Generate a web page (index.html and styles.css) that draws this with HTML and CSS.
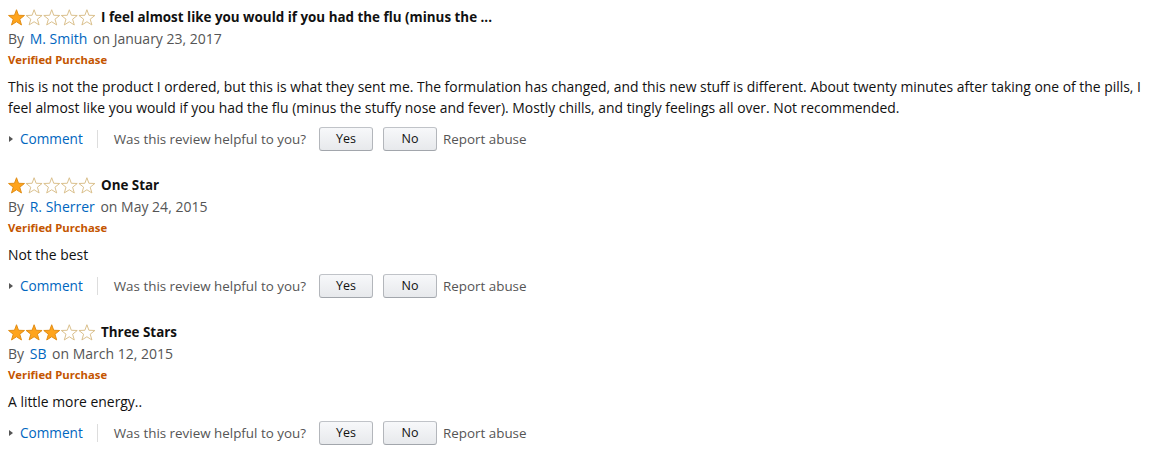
FILE: index.html
```html
<!DOCTYPE html>
<html>
<head>
<meta charset="utf-8">
<link rel="stylesheet" href="styles.css">
</head>
<body>
<svg width="0" height="0" class="defs">
  <defs>
    <symbol id="star" viewBox="0 0 16 16">
      <polygon points="8,0.7 9.9,5.9 15.5,6.1 11.1,9.6 12.7,15 8,12 3.3,15 4.9,9.6 0.5,6.1 6.1,5.9" stroke-linejoin="round"/>
    </symbol>
  </defs>
</svg>
<div class="reviews">
  <div class="review">
    <div class="title-row">
      <svg class="stars" width="88" height="17" viewBox="0 0 88 17">
        <use href="#star" x="0" y="0" width="17" height="17" class="full"/>
        <use href="#star" x="17.6" y="0" width="17" height="17" class="empty"/>
        <use href="#star" x="35.2" y="0" width="17" height="17" class="empty"/>
        <use href="#star" x="52.8" y="0" width="17" height="17" class="empty"/>
        <use href="#star" x="70.4" y="0" width="17" height="17" class="empty"/>
      </svg>
      <span class="title">I feel almost like you would if you had the flu (minus the ...</span>
    </div>
    <div class="byline">By <a class="link">M. Smith</a> on January 23, 2017</div>
    <div class="verified">Verified Purchase</div>
    <div class="body">This is not the product I ordered, but this is what they sent me. The formulation has changed, and this new stuff is different. About twenty minutes after taking one of the pills, I feel almost like you would if you had the flu (minus the stuffy nose and fever). Mostly chills, and tingly feelings all over. Not recommended.</div>
    <div class="actions">
      <span class="caret"></span><a class="link comment">Comment</a>
      <span class="sep"></span>
      <span class="helpful">Was this review helpful to you?</span>
      <button class="btn">Yes</button>
      <button class="btn">No</button>
      <span class="report">Report abuse</span>
    </div>
  </div>

  <div class="review">
    <div class="title-row">
      <svg class="stars" width="88" height="17" viewBox="0 0 88 17">
        <use href="#star" x="0" y="0" width="17" height="17" class="full"/>
        <use href="#star" x="17.6" y="0" width="17" height="17" class="empty"/>
        <use href="#star" x="35.2" y="0" width="17" height="17" class="empty"/>
        <use href="#star" x="52.8" y="0" width="17" height="17" class="empty"/>
        <use href="#star" x="70.4" y="0" width="17" height="17" class="empty"/>
      </svg>
      <span class="title">One Star</span>
    </div>
    <div class="byline">By <a class="link">R. Sherrer</a> on May 24, 2015</div>
    <div class="verified">Verified Purchase</div>
    <div class="body">Not the best</div>
    <div class="actions">
      <span class="caret"></span><a class="link comment">Comment</a>
      <span class="sep"></span>
      <span class="helpful">Was this review helpful to you?</span>
      <button class="btn">Yes</button>
      <button class="btn">No</button>
      <span class="report">Report abuse</span>
    </div>
  </div>

  <div class="review">
    <div class="title-row">
      <svg class="stars" width="88" height="17" viewBox="0 0 88 17">
        <use href="#star" x="0" y="0" width="17" height="17" class="full"/>
        <use href="#star" x="17.6" y="0" width="17" height="17" class="full"/>
        <use href="#star" x="35.2" y="0" width="17" height="17" class="full"/>
        <use href="#star" x="52.8" y="0" width="17" height="17" class="empty"/>
        <use href="#star" x="70.4" y="0" width="17" height="17" class="empty"/>
      </svg>
      <span class="title">Three Stars</span>
    </div>
    <div class="byline">By <a class="link">SB</a> on March 12, 2015</div>
    <div class="verified">Verified Purchase</div>
    <div class="body">A little more energy..</div>
    <div class="actions">
      <span class="caret"></span><a class="link comment">Comment</a>
      <span class="sep"></span>
      <span class="helpful">Was this review helpful to you?</span>
      <button class="btn">Yes</button>
      <button class="btn">No</button>
      <span class="report">Report abuse</span>
    </div>
  </div>
</div>
</body>
</html>
```

FILE: styles.css
```css
html, body {
  margin: 0;
  padding: 0;
  background: #fff;
}
body {
  font-family: "Open Sans", "Liberation Sans", Arial, sans-serif;
  font-size: 14px;
  color: #111;
}
.defs {
  position: absolute;
  width: 0;
  height: 0;
}
.reviews {
  padding: 7px 8px 0 8px;
  display: flex;
  flex-direction: column;
  gap: 23.5px;
}
.review {
  display: flex;
  flex-direction: column;
}
.title-row {
  display: flex;
  align-items: center;
  height: 20px;
}
.stars {
  display: block;
  margin-right: 5px;
}
.stars .full {
  fill: #ffa41c;
  stroke: #e08a12;
  stroke-width: 0.9;
}
.stars .empty {
  fill: #fff;
  stroke: #d8bd87;
  stroke-width: 0.9;
}
.title {
  font-size: 13.4px;
  font-weight: bold;
  line-height: 20px;
}
.byline {
  line-height: 20px;
  margin-top: 1.5px;
  color: #555;
}
.byline .link {
  margin: 0 2px;
}
.link {
  color: #0066c0;
  cursor: pointer;
}
.verified {
  font-size: 11.3px;
  font-weight: bold;
  color: #c45500;
  line-height: 18px;
  margin-top: 2.5px;
}
.body {
  font-size: 13.9px;
  line-height: 21px;
  margin-top: 7px;
}
.actions {
  display: flex;
  align-items: center;
  height: 26px;
  margin-top: 7.5px;
  color: #555;
  font-size: 13.4px;
}
.actions .link {
  font-size: 13.6px;
}
.caret {
  width: 0;
  height: 0;
  border-top: 3.5px solid transparent;
  border-bottom: 3.5px solid transparent;
  border-left: 4px solid #555;
  margin-left: 1px;
  margin-right: 7px;
}
.sep {
  width: 1px;
  height: 18px;
  background: #ddd;
  margin: 0 16px 0 14px;
}
.helpful {
  margin-right: 13px;
}
.btn {
  width: 54px;
  height: 24px;
  border: 1px solid #adb1b8;
  border-color: #c0c3c8 #b3b6bb #a2a6ac;
  border-radius: 3px;
  background: linear-gradient(to bottom, #f7f8fa, #e7e9ec);
  font-family: inherit;
  font-size: 12.5px;
  color: #111;
  padding: 0;
  margin-right: 10px;
  line-height: 22px;
}
.btn + .btn {
  margin-right: 6px;
}
.report {
  color: #555;
}
```
